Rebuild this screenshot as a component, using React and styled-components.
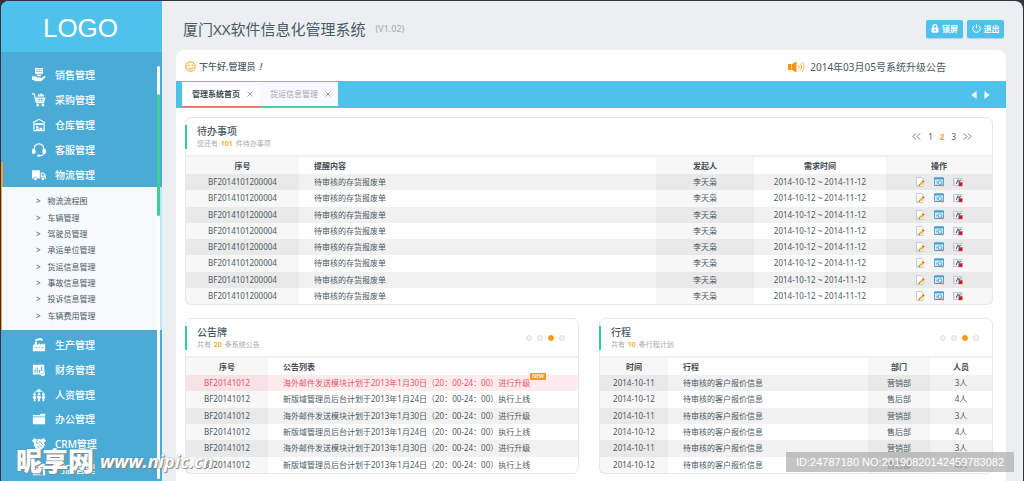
import styled, { createGlobalStyle } from "styled-components";

const SALES = (
  <>
    <path d="M3.5 0h9v6.5h-9z" />
    <path d="M5 2h6M5 4h6" stroke="#4babd7" strokeWidth="0.8" />
    <path d="M0 9.5h4l2 1.4h3.4c1 0 1 1.2 0 1.2H7h3l4-2.6c1.2-.5 2 .6 1.2 1.3L10.6 15H3.5L2 13.6H0z" />
    <path d="M5 7.5h6L9.5 9.5h-3z" />
  </>
);

const CART = (
  <>
    <path d="M0 1h2.5L5 11h9" fill="none" stroke="#fff" strokeWidth="1.3" />
    <path d="M4 5h11.5L14 10H5z" />
    <path d="M6 4l1-3 2 1 2-2 1 2 2 0-.5 2z" />
    <path d="M6 7.5h8M8 5.5v4M11 5.5v4" stroke="#4babd7" strokeWidth="0.6" />
    <circle cx="6.5" cy="13.8" r="1.6" />
    <circle cx="12.5" cy="13.8" r="1.6" />
  </>
);

const STORE = (
  <>
    <path
      d="M1 5.5L8 1.5l7 4M2.2 6v8.5h11.6V6M3 7h10"
      fill="none"
      stroke="#fff"
      strokeWidth="1.3"
    />
    <path d="M4 6h8v1.8H4zM4.5 9.5h3v2h-3zM4.5 12h3.5v2.5H4.5zM8.5 11h3.2v3.5H8.5z" />
  </>
);

const HEADSET = (
  <>
    <path
      d="M2.5 8V6.5a5.5 5.5 0 0111 0V8M13.5 10.5c0 2.5-2 4-4.5 4"
      fill="none"
      stroke="#fff"
      strokeWidth="1.4"
    />
    <rect x="0" y="6.5" width="4" height="6" rx="1.8" />
    <rect x="12" y="6.5" width="4" height="6" rx="1.8" />
    <rect x="6" y="13.2" width="4" height="2.6" rx="1.3" />
  </>
);

const TRUCK = (
  <>
    <path d="M0 2.5h9V12H0zM10 5h3.4L16 8.5V12h-6z" />
    <path d="M11.2 6.2h1.7l1.4 2.3h-3.1z" fill="#4babd7" />
    <circle cx="4" cy="12.3" r="2" stroke="#4babd7" strokeWidth="0.8" />
    <circle cx="12.5" cy="12.3" r="2" stroke="#4babd7" strokeWidth="0.8" />
  </>
);

const FACTORY = (
  <>
    <path d="M1 15V8.5L3 7l.5-3h2L6 8l3-2v2l3-2v2l3-2v9z" />
    <path d="M3.5 3c0-2 2-2.5 3.5-2 1-1.3 4-1 4.5 0 1.5 0 1.5 2-.5 2-1.5 0-2-.6-3-.3C6.5 3.5 5 2.3 4.8 3.4z" />
    <path d="M4 11h2M7.5 11h2M11 11h2" stroke="#4babd7" strokeWidth="1" />
  </>
);

const FINANCE = (
  <>
    <path d="M1 2h13v8.5h-3V13H1z" />
    <path d="M3.5 11V7M6 11V5M8.5 11V8M11 9V4" stroke="#4babd7" strokeWidth="1.2" />
    <circle cx="12.3" cy="12.3" r="2.7" />
    <path d="M10.8 12.3h3" stroke="#4babd7" strokeWidth="0.8" />
  </>
);

const PEOPLE = (
  <>
    <path d="M2 6.5C4 2 12 2 14 6.5" fill="none" stroke="#fff" strokeWidth="1" />
    <circle cx="8" cy="3" r="2" />
    <circle cx="3" cy="7.5" r="1.5" />
    <circle cx="8" cy="7" r="1.5" />
    <circle cx="13" cy="7.5" r="1.5" />
    <path d="M1 9.5h3.8V12H4v3H2v-3H1zM6 9h4v3H9v3H7v-3H6zM11.2 9.5H15V12h-1v3h-2v-3h-.8z" />
  </>
);

const FOLDER = (
  <>
    <path d="M1 5V3.5h8L10 2h5v3z" />
    <path d="M1 6h14v8H1z" />
  </>
);

const CRM = (
  <>
    <path d="M0 4l3-3 3 2 2-1 2 1 3-2 3 3-2.5 3L15 9l-1.5 1.5v1.5l-1.5.5-.5 1.5H10L8.5 15 4 13l-.5-2L2 10l.5-3z" />
    <path
      d="M6 3.5L5 7l2 .5 2-2 4 4M6 10l2 2.5M8 8.5l2.5 3"
      fill="none"
      stroke="#4babd7"
      strokeWidth="0.9"
    />
  </>
);

const SHOP = (
  <>
    <path d="M2 2h12l2 4H0zM1 7h14v8H1z" />
    <path d="M3.5 9h4v4h-4zM9.5 9h3v6h-3z" fill="#4babd7" />
  </>
);

const mainNav = [
  { label: "销售管理", icon: SALES },
  { label: "采购管理", icon: CART },
  { label: "仓库管理", icon: STORE },
  { label: "客服管理", icon: HEADSET },
  { label: "物流管理", icon: TRUCK, active: true },
];

const subNav = [
  "物流流程图",
  "车辆管理",
  "驾驶员管理",
  "承运单位管理",
  "货运信息管理",
  "事故信息管理",
  "投诉信息管理",
  "车辆费用管理",
];

const moreNav = [
  { label: "生产管理", icon: FACTORY },
  { label: "财务管理", icon: FINANCE },
  { label: "人资管理", icon: PEOPLE },
  { label: "办公管理", icon: FOLDER },
  { label: "CRM管理", icon: CRM },
  { label: "门店管理", icon: SHOP },
];

const todos = Array.from({ length: 8 }, (_, id) => ({
  id,
  code: "BF2014101200004",
  content: "待审核的存货报废单",
  owner: "李天枭",
  time: "2014-10-12 ~ 2014-11-12",
}));

const UPGRADE = "海外邮件发送模块计划于2013年1月30日（20：00-24：00）进行升级";
const ONLINE = "新版域管理员后台计划于2013年1月24日（20：00-24：00）执行上线";
const notices = [UPGRADE, ONLINE, UPGRADE, ONLINE, UPGRADE, ONLINE];

const trips = [0, 1, 2, 3, 4, 5].map((id) => ({
  id,
  date: id % 2 ? "2014-10-12" : "2014-10-11",
  content: "待审核的客户报价信息",
  dept: id % 2 ? "售后部" : "营销部",
  people: id % 2 ? "4人" : "3人",
}));

const NavList = ({ items }) => (
  <NavItems $count={items.length}>
    {items.map((item) => (
      <li key={item.label}>
        <NavLink href="#" $active={item.active}>
          <svg width="14" height="14" viewBox="0 0 16 16" fill="#fff" aria-hidden="true">
            {item.icon}
          </svg>
          {item.label}
        </NavLink>
      </li>
    ))}
  </NavItems>
);

const PanelTitle = ({ title, before, count, after, children }) => (
  <PanelHeader>
    <TitleBlock>
      <h2>{title}</h2>
      <p>
        {before} <b>{count}</b> {after}
      </p>
    </TitleBlock>
    {children}
  </PanelHeader>
);

const Pager = () => (
  <Dots>
    {[1, 2, 3, 4].map((n) => (
      <Dot key={n} type="button" aria-label={`第${n}页`} $on={n === 3} />
    ))}
  </Dots>
);

const RowActions = () => (
  <Actions>
    <button type="button" aria-label="编辑">
      <svg width="10" height="10" viewBox="0 0 10 10">
        <path d="M1.5.5h5L8 2v7.5H1.5z" fill="#fdfdfd" stroke="#b9b9b9" strokeWidth="0.7" />
        <path d="M2.5 7.5h2v1h-2z" fill="#9ccf6a" />
        <path d="M3.8 8.8l.5-1.8 3.5-3.5 1.5 1.3-3.7 3.5z" fill="#f5b323" />
        <path d="M7.2 4.1l.9-.9 1.4 1.3-.9.9z" fill="#e0503c" />
        <path d="M3.8 8.8l.4-1.4 1 .9z" fill="#774a20" />
      </svg>
    </button>
    <button type="button" aria-label="查看">
      <svg width="10" height="10" viewBox="0 0 10 10">
        <path d="M.6 1h8.8v7.5H.6z" fill="#e9f5fb" stroke="#3b93c4" strokeWidth="0.9" />
        <path d="M.5.6h9v1.8h-9z" fill="#3ba0d4" />
        <path d="M2 4h2M2 5.5h2M2 7h2" stroke="#7ab6d6" strokeWidth="0.8" />
        <circle cx="6" cy="5.6" r="1.9" fill="#d6f2fc" stroke="#3b93c4" strokeWidth="0.8" />
        <path d="M7.3 7.2l1.9 2.2" stroke="#e38a2c" strokeWidth="1.3" />
      </svg>
    </button>
    <button type="button" aria-label="删除">
      <svg width="10" height="10" viewBox="0 0 10 10">
        <path d="M.5 1.5H9v7H.5z" fill="#f7fafc" stroke="#a9b6c2" strokeWidth="0.7" />
        <path d="M1.5 3v4.5" stroke="#c6ced6" strokeWidth="0.8" />
        <path d="M3.2 7L5 3l1.5 2 1-2.2" fill="none" stroke="#3f6a96" strokeWidth="1.1" />
        <path d="M5.5 5.2h4v4h-4z" fill="#d93636" />
        <path d="M6.5 6.2l2 2M8.5 6.2l-2 2" stroke="#8d1010" strokeWidth="0.9" />
      </svg>
    </button>
  </Actions>
);

export default function App() {
  return (
    <Page>
      <GlobalStyle />
      <Shell>
        <Sidebar>
          <Logo>LOGO</Logo>
          <Nav>
            <NavList items={mainNav} />
            <SubNav>
              {subNav.map((label) => (
                <li key={label}>
                  <a href="#">
                    <span>&gt;</span>
                    {label}
                  </a>
                </li>
              ))}
            </SubNav>
            <NavList items={moreNav} />
            <Rail>
              <RailThumb />
            </Rail>
          </Nav>
        </Sidebar>

        <Main>
          <TopBar>
            <h1>厦门XX软件信息化管理系统</h1>
            <small>(V1.02)</small>
            <TopButtons>
              <TopButton type="button">
                <svg width="8" height="9" viewBox="0 0 8 9" aria-hidden="true">
                  <path d="M2 4V2.6a2 2 0 014 0V4" fill="none" stroke="#fff" strokeWidth="1.2" />
                  <rect x="0.5" y="3.5" width="7" height="5.3" rx="1.5" fill="#fff" />
                  <path d="M4 5v2.2" stroke="#4ec2eb" strokeWidth="1.2" />
                </svg>
                锁屏
              </TopButton>
              <TopButton type="button">
                <svg width="9" height="9" viewBox="0 0 9 9" aria-hidden="true">
                  <path
                    d="M2.5 1.5a3.7 3.7 0 104 0M4.5.3v4"
                    fill="none"
                    stroke="#fff"
                    strokeWidth="1"
                  />
                </svg>
                退出
              </TopButton>
            </TopButtons>
          </TopBar>

          <Board>
            <Greeting>
              <svg width="11" height="11" viewBox="0 0 11 11" aria-hidden="true">
                <circle cx="5.5" cy="5.5" r="4.8" fill="#fff8e2" stroke="#f0a01e" />
                <circle cx="3.7" cy="4.2" r="0.8" fill="#f0a01e" />
                <circle cx="7.3" cy="4.2" r="0.8" fill="#f0a01e" />
                <path d="M3 6.5c1 2 4 2 5 0" fill="none" stroke="#f0a01e" />
              </svg>
              <strong>
                下午好,管理员 <em>!</em>
              </strong>
              <Announcement href="#">
                <svg width="17" height="12" viewBox="0 0 17 12" aria-hidden="true">
                  <path d="M0 3h3.5v6H0zM4 3L8.5.5v11L4 9z" fill="#f7960a" />
                  <path
                    d="M10.3 4c1 1.2 1 2.8 0 4M12.2 2.5c1.9 2.1 1.9 4.9 0 7M14 1c2.7 3 2.7 7 0 10"
                    fill="none"
                    stroke="#f9b24a"
                    strokeWidth="1"
                  />
                </svg>
                2014年03月05号系统升级公告
              </Announcement>
            </Greeting>

            <TabBar>
              <Tab type="button" $active>
                管理系统首页
                <CloseMark />
              </Tab>
              <Tab type="button">
                货运信息管理
                <CloseMark />
              </Tab>
              <TabArrows>
                <button type="button" aria-label="向左">
                  <svg width="6" height="8" viewBox="0 0 6 8">
                    <path d="M5.5 0v8L.5 4z" fill="#fff" />
                  </svg>
                </button>
                <button type="button" aria-label="向右">
                  <svg width="6" height="8" viewBox="0 0 6 8">
                    <path d="M.5 0v8l5-4z" fill="#fff" />
                  </svg>
                </button>
              </TabArrows>
            </TabBar>

            <Panels>
              <Panel $wide>
                <PanelTitle title="待办事项" before="您还有" count="101" after="件待办事项">
                  <Pages>
                    <button type="button" aria-label="首页">
                      <Chevrons />
                    </button>
                    <button type="button">1</button>
                    <button type="button" className="current">
                      2
                    </button>
                    <button type="button">3</button>
                    <button type="button" aria-label="末页">
                      <Chevrons right />
                    </button>
                  </Pages>
                </PanelTitle>
                <Table $height={147}>
                  <colgroup>
                    <Col $width={113} />
                    <col />
                    <Col $width={98} />
                    <Col $width={132} />
                    <Col $width={106} />
                  </colgroup>
                  <thead>
                    <tr>
                      <Th $shade>序号</Th>
                      <Th $left>提醒内容</Th>
                      <Th $shade>发起人</Th>
                      <Th>需求时间</Th>
                      <Th $shade>操作</Th>
                    </tr>
                  </thead>
                  <tbody>
                    {todos.map((row) => (
                      <Row key={row.id}>
                        <Td $shade>{row.code}</Td>
                        <Td $left>{row.content}</Td>
                        <Td $shade>{row.owner}</Td>
                        <Td>{row.time}</Td>
                        <Td $shade>
                          <RowActions />
                        </Td>
                      </Row>
                    ))}
                  </tbody>
                </Table>
              </Panel>

              <Panel>
                <PanelTitle title="公告牌" before="共有" count="20" after="条系统公告">
                  <Pager />
                </PanelTitle>
                <Table $height={115}>
                  <colgroup>
                    <Col $width={82} />
                    <col />
                  </colgroup>
                  <thead>
                    <tr>
                      <Th $shade>序号</Th>
                      <Th $left>公告列表</Th>
                    </tr>
                  </thead>
                  <tbody>
                    {notices.map((text, i) => (
                      <Row key={i} $hot={i === 0}>
                        <Td $shade>BF20141012</Td>
                        <Td $left>
                          <NoticeText>
                            {text}
                            {i === 0 && <NewBadge>NEW</NewBadge>}
                          </NoticeText>
                        </Td>
                      </Row>
                    ))}
                  </tbody>
                </Table>
              </Panel>

              <Panel>
                <PanelTitle title="行程" before="共有" count="10" after="条行程计划">
                  <Pager />
                </PanelTitle>
                <Table $height={115}>
                  <colgroup>
                    <Col $width={68} />
                    <col />
                    <Col $width={62} />
                    <Col $width={62} />
                  </colgroup>
                  <thead>
                    <tr>
                      <Th $shade>时间</Th>
                      <Th $left>行程</Th>
                      <Th $shade>部门</Th>
                      <Th>人员</Th>
                    </tr>
                  </thead>
                  <tbody>
                    {trips.map((row) => (
                      <Row key={row.id}>
                        <Td $shade>{row.date}</Td>
                        <Td $left>{row.content}</Td>
                        <Td $shade>{row.dept}</Td>
                        <Td>{row.people}</Td>
                      </Row>
                    ))}
                  </tbody>
                </Table>
              </Panel>
            </Panels>
          </Board>
        </Main>
      </Shell>
      <SiteMark>
        <b>昵享网</b>
        <i>www.nipic.cn</i>
      </SiteMark>
      <IdMark>ID:24787180 NO:20190820142459783082</IdMark>
    </Page>
  );
}

const CloseMark = () => (
  <svg width="6" height="6" viewBox="0 0 6 6" aria-hidden="true">
    <path d="M.5.5l5 5M5.5.5l-5 5" stroke="#a3a8ad" strokeWidth="1" />
  </svg>
);

const Chevrons = ({ right }) => (
  <svg width="9" height="7" viewBox="0 0 9 7" aria-hidden="true">
    <path
      d={right ? "M1 .5l3 3-3 3M5 .5l3 3-3 3" : "M4 .5l-3 3 3 3M8 .5l-3 3 3 3"}
      fill="none"
      stroke="#6d7377"
      strokeWidth="1"
    />
  </svg>
);

const GlobalStyle = createGlobalStyle`
  * {
    box-sizing: border-box;
  }
  body {
    margin: 0;
    background: #33323e;
    color: #4b5964;
    font-family: "Noto Sans", "Noto Sans CJK SC", sans-serif;
    font-size: 8px;
    line-height: 12px;
  }
  h1, h2, p, ul {
    margin: 0;
    padding: 0;
  }
  ul {
    list-style: none;
  }
  a {
    color: inherit;
    text-decoration: none;
  }
  button {
    border: 0;
    padding: 0;
    background: none;
    color: inherit;
    font: inherit;
    cursor: pointer;
  }
  svg {
    display: block;
    flex: none;
  }
`;

const Page = styled.div`
  position: relative;
  display: flex;
  min-height: 100vh;
  padding: 1px 1px 0;
  overflow: hidden;
`;

const Shell = styled.div`
  flex: 1;
  display: grid;
  grid-template-columns: 161px 1fr;
  background: #ebeff2;
  border-radius: 8px 8px 0 0;
  overflow: hidden;
`;

const Sidebar = styled.aside`
  display: flex;
  flex-direction: column;
  background: #4babd7;
`;

const Logo = styled.div`
  display: flex;
  align-items: center;
  justify-content: center;
  height: 51px;
  padding: 2px 2px 0 0;
  background: #4ec2eb;
  color: #fff;
  font-family: "Liberation Sans", sans-serif;
  font-size: 26px;
  line-height: 30px;
`;

const Nav = styled.nav`
  position: relative;
  flex: 1;
  padding-top: 11px;
`;

const NavItems = styled.ul`
  display: grid;
  grid-auto-rows: 1fr;
  height: ${({ $count }) => ($count === 5 ? 124 : 148)}px;
`;

const NavLink = styled.a`
  display: flex;
  align-items: center;
  gap: 9px;
  height: 100%;
  padding-left: 29px;
  border-left: 2px solid ${({ $active }) => ($active ? "#f7a325" : "transparent")};
  color: #fff;
  font-size: 10px;
  font-weight: 500;
`;

const SubNav = styled.ul`
  display: grid;
  grid-auto-rows: 1fr;
  height: 143px;
  margin-bottom: 3px;
  padding: 6px 0;
  border-left: 1px solid #f7a325;
  border-right: 2px solid #bfe6f7;
  background: #f7fafd;

  a {
    display: flex;
    align-items: center;
    gap: 7px;
    height: 100%;
    padding-left: 34px;
  }
`;

const Rail = styled.div`
  position: absolute;
  top: 14px;
  right: 2px;
  bottom: 3px;
  width: 3px;
  padding-top: 28px;
  border-radius: 2px;
  background: #fff;
`;

const RailThumb = styled.div`
  height: 122px;
  border-radius: 2px;
  background: #41cb9d;
`;

const Main = styled.main`
  display: flex;
  flex-direction: column;
  min-width: 0;
  padding: 0 17px 0 14px;
`;

const TopBar = styled.header`
  display: flex;
  align-items: center;
  height: 49px;
  padding: 6px 2px 0 7px;

  h1 {
    font-size: 15px;
    font-weight: 400;
    line-height: 20px;
  }
  small {
    margin-left: 10px;
    color: #a2a9ae;
    font-size: 9px;
  }
`;

const TopButtons = styled.div`
  display: flex;
  gap: 4px;
  margin-left: auto;
`;

const TopButton = styled.button`
  display: flex;
  align-items: center;
  justify-content: center;
  gap: 3px;
  width: 37px;
  height: 18px;
  border-radius: 2px;
  background: #4ec2eb;
  box-shadow: 0 1px 1px #b9d3de;
  color: #fff;
  font-weight: 700;
`;

const Board = styled.section`
  flex: 1;
  border-radius: 8px 8px 0 0;
  background: #fff;
`;

const Greeting = styled.div`
  display: flex;
  align-items: center;
  gap: 3px;
  height: 31px;
  padding: 2px 60px 0 9px;

  strong {
    font-size: 9px;
    font-weight: 500;
  }
  em {
    margin-left: 2px;
  }
`;

const Announcement = styled.a`
  display: flex;
  align-items: center;
  gap: 5px;
  margin-left: auto;
  font-size: 10px;
`;

const TabBar = styled.div`
  display: flex;
  height: 27px;
  padding: 1px 16px 1px 6px;
  background: #4ec2eb;
`;

const Tab = styled.button`
  display: flex;
  align-items: center;
  justify-content: center;
  gap: 7px;
  width: 78px;
  padding-left: 3px;
  border-bottom: 1px solid ${({ $active }) => ($active ? "#e8705a" : "#52c3b4")};
  background: ${({ $active }) => ($active ? "#fff" : "#f7f9fc")};
  color: ${({ $active }) => ($active ? "#3d4a54" : "#a3a9af")};
  font-weight: ${({ $active }) => ($active ? 700 : 400)};
`;

const TabArrows = styled.div`
  display: flex;
  align-items: center;
  gap: 7px;
  margin-left: auto;
`;

const Panels = styled.div`
  display: grid;
  grid-template-columns: 1fr 1fr;
  gap: 13px 20px;
  padding: 9px 13px 8px 9px;
`;

const Panel = styled.section`
  grid-column: ${({ $wide }) => ($wide ? "1 / -1" : "auto")};
  border: 1px solid #e6e7e8;
  border-radius: 6px;
  min-width: 0;
`;

const PanelHeader = styled.div`
  display: flex;
  align-items: center;
  justify-content: space-between;
  height: 39px;
  padding-right: 13px;
  border-bottom: 2px solid #efefef;
`;

const TitleBlock = styled.div`
  margin-left: -1px;
  padding-left: 10px;
  border-left: 2px solid #35cba0;

  h2 {
    font-size: 10px;
    font-weight: 500;
    line-height: 13px;
  }
  p {
    color: #a5abb0;
    font-size: 7px;
    line-height: 11px;
  }
  b {
    margin: 0 1px;
    color: #f5a623;
    font-weight: 600;
  }
`;

const Pages = styled.div`
  display: flex;
  align-items: center;
  gap: 7px;
  padding-right: 7px;

  .current {
    color: #f5a623;
    font-weight: 700;
  }
`;

const Dots = styled.div`
  display: flex;
  gap: 5px;
`;

const Dot = styled.button`
  width: 6px;
  height: 6px;
  border: 1px solid ${({ $on }) => ($on ? "#f79a0e" : "#dcdedf")};
  border-radius: 50%;
  background: ${({ $on }) => ($on ? "#f79a0e" : "#f5f5f5")};
`;

const Table = styled.table`
  width: 100%;
  height: ${({ $height }) => $height}px;
  table-layout: fixed;
  border-collapse: collapse;
`;

const Col = styled.col`
  width: ${({ $width }) => $width}px;
`;

const Th = styled.th`
  height: 17px;
  padding: 0 0 0 ${({ $left }) => ($left ? 15 : 0)}px;
  background: ${({ $shade }) => ($shade ? "rgba(0, 0, 0, 0.03)" : "transparent")};
  color: #444b50;
  font-weight: 600;
  text-align: ${({ $left }) => ($left ? "left" : "center")};
`;

const Td = styled.td`
  padding: 0 0 0 ${({ $left }) => ($left ? 15 : 0)}px;
  background: ${({ $shade }) => ($shade ? "rgba(0, 0, 0, 0.03)" : "transparent")};
  text-align: ${({ $left }) => ($left ? "left" : "center")};
  white-space: nowrap;
`;

const Row = styled.tr`
  color: ${({ $hot }) => ($hot ? "#e0566a" : "inherit")};

  &:nth-child(odd) {
    background: ${({ $hot }) => ($hot ? "#ffebed" : "#f1f1f1")};
  }
`;

const Actions = styled.div`
  display: flex;
  justify-content: center;
  gap: 9px;
`;

const NoticeText = styled.span`
  position: relative;
`;

const NewBadge = styled.span`
  position: absolute;
  bottom: 8px;
  left: 100%;
  padding: 0 2px;
  background: #f79a0e;
  color: #fff;
  font-size: 5px;
  font-weight: 600;
  line-height: 7px;
`;

const SiteMark = styled.div`
  position: absolute;
  bottom: 2px;
  left: 16px;
  display: flex;
  align-items: center;
  gap: 6px;
  color: #fff;
  text-shadow: 0 0 1px #777, 1px 1px 1px #888;
  line-height: 38px;

  b {
    font-size: 26px;
    font-weight: 900;
  }
  i {
    font-family: "Open Sans", sans-serif;
    font-size: 18px;
    font-weight: 700;
  }
`;

const IdMark = styled.div`
  position: absolute;
  right: 10px;
  bottom: 10px;
  padding: 0 10px;
  background: rgba(165, 165, 165, 0.65);
  color: #fff;
  font-family: "Liberation Sans", sans-serif;
  font-size: 11px;
  line-height: 20px;
`;
